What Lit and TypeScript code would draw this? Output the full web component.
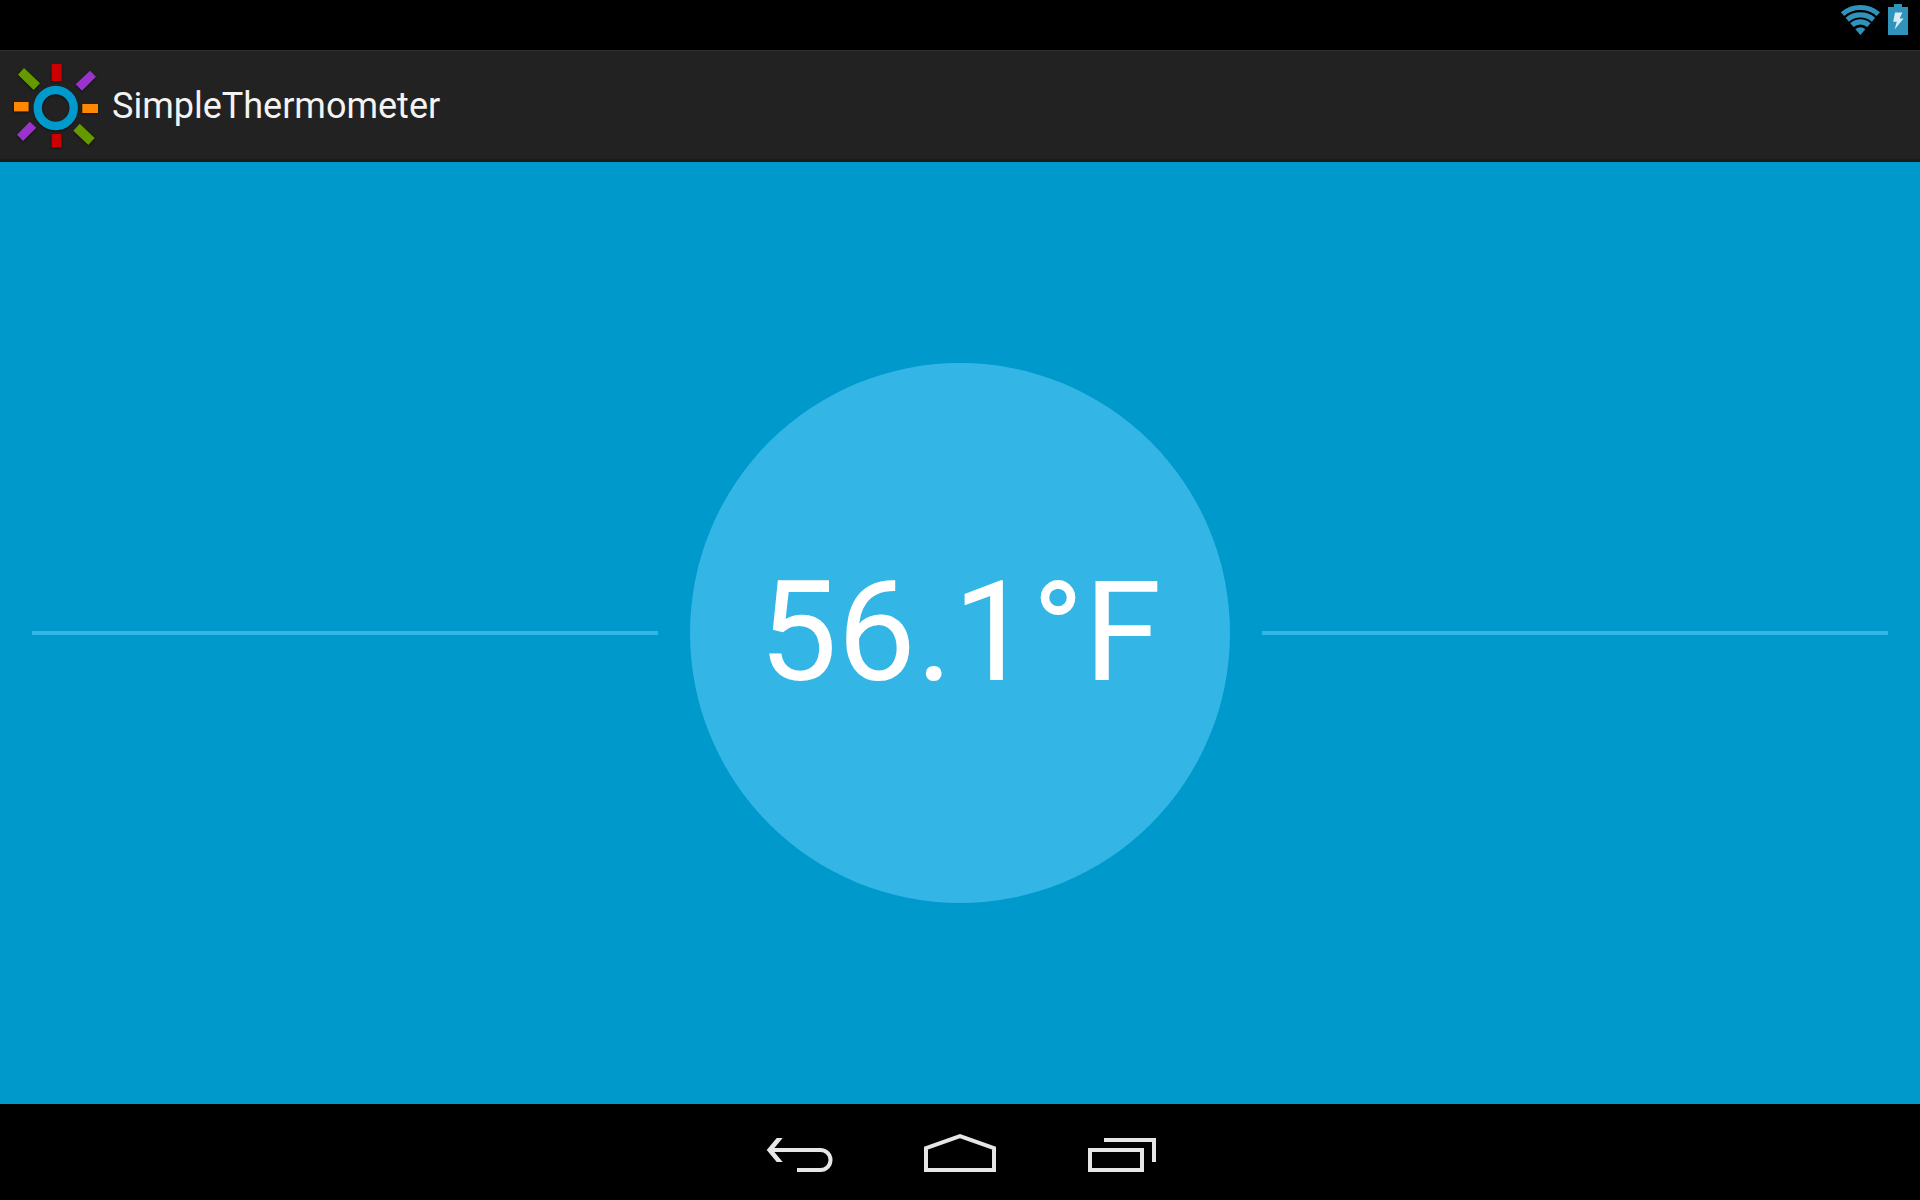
import { LitElement, html, css, svg } from "lit";
import { customElement, property } from "lit/decorators.js";

@customElement("status-bar")
export class StatusBar extends LitElement {
  static styles = css`
    :host {
      display: flex;
      justify-content: flex-end;
      gap: 7px;
      height: 50px;
      padding: 4px 12px 0 0;
      box-sizing: border-box;
      background: #000;
    }
    .glyph {
      display: block;
      height: 32px;
      fill: #2f93bb;
    }
    .arc {
      fill: none;
      stroke: #2f93bb;
      stroke-width: 5.2;
    }
    .bolt {
      fill: #d8edf5;
    }
  `;

  render() {
    return html`
      <svg class="glyph" width="41" height="32" viewBox="0 0 41 32" role="img" aria-label="Wi-Fi connected">
        <path class="arc" d="M2.5 10.1 A27.5 27.5 0 0 1 38.3 10.1" />
        <path class="arc" d="M7.3 15.7 A20.2 20.2 0 0 1 33.5 15.7" />
        <path class="arc" d="M11.9 21.1 A13 13 0 0 1 28.9 21.1" />
        <path d="M15.4 25.2 A7.7 7.7 0 0 1 25.4 25.2 L20.4 31 Z" />
      </svg>
      <svg class="glyph" width="20" height="32" viewBox="0 0 20 32" role="img" aria-label="Battery charging">
        <path d="M6 0 H14 V3 H20 V31 H0 V3 H6 Z" />
        <path class="bolt" d="M7 8.6 H14.4 L11.6 14.6 H15.6 L6.6 25.4 L8.8 17.8 H5.2 Z" />
      </svg>
    `;
  }
}

@customElement("action-bar")
export class ActionBar extends LitElement {
  @property() heading = "";

  static styles = css`
    :host {
      display: flex;
      align-items: center;
      gap: 8px;
      height: 112px;
      padding: 0 8px;
      box-sizing: border-box;
      background: #222;
      box-shadow: inset 0 1px #2e2e2e, inset 0 -3px #1b1b1b;
    }
    .logo {
      display: block;
      width: 96px;
      height: 96px;
      filter: drop-shadow(0 1px 1px #0008);
    }
    .title {
      margin: 0;
      font: 400 36px/48px Roboto, sans-serif;
      color: #f3f3f3;
    }
    .red { fill: #c00; }
    .orange { fill: #f80; }
    .green { fill: #690; }
    .purple { fill: #93c; }
    .ring {
      fill: none;
      stroke: #09c;
      stroke-width: 8.4;
    }
  `;

  render() {
    return html`
      <svg class="logo" viewBox="8 58 96 96" aria-hidden="true">
        <rect class="red" x="51.7" y="64" width="10" height="17" />
        <rect class="red" x="51.7" y="134" width="9.6" height="13.3" />
        <rect class="orange" x="14" y="102" width="14.6" height="9.4" />
        <rect class="orange" x="82.3" y="104" width="15.7" height="9" />
        <path class="green" d="M24 68 L40 83.3 L33.7 90 L18 74.7 Z M79.7 123.7 L94.7 138 L88.3 145 L73.3 130.7 Z" />
        <path class="purple" d="M90 70.7 L96 76.7 L82 90.7 L75.7 84.3 Z M29.7 121.7 L36.3 127.7 L23 141 L17 134.7 Z" />
        <circle class="ring" cx="55.7" cy="108" r="18" />
      </svg>
      <h1 class="title">${this.heading}</h1>
    `;
  }
}

@customElement("temperature-dial")
export class TemperatureDial extends LitElement {
  @property() reading = "";

  static styles = css`
    :host {
      display: flex;
      align-items: center;
      gap: 32px;
      padding: 0 32px;
      background: #09c;
    }
    .rule {
      flex: 1;
      height: 4px;
      background: #33b5e5;
    }
    .dial {
      display: flex;
      align-items: center;
      justify-content: center;
      width: 540px;
      aspect-ratio: 1;
      box-sizing: border-box;
      padding-bottom: 2px;
      border-radius: 50%;
      background: #33b5e5;
      color: #fff;
      font: 400 140px/164px Roboto, sans-serif;
    }
  `;

  render() {
    return html`
      <div class="rule"></div>
      <div class="dial">${this.reading}</div>
      <div class="rule"></div>
    `;
  }
}

const NAV_ITEMS = [
  {
    label: "Back",
    shape: svg`
      <path d="M50 46 H100.5 A10 10 0 0 1 100.5 66 H77" />
      <path class="solid" d="M46.7 46 L56.7 34 H62.7 L52.7 46 L62.7 58 H56.7 Z" />`,
  },
  {
    label: "Home",
    shape: svg`<path d="M46 66 V44.2 L80 32.2 L114 44.2 V66 Z" />`,
  },
  {
    label: "Recent apps",
    shape: svg`<path d="M50 46 H102 V66 H50 Z M64 36 H114 V58" />`,
  },
];

@customElement("nav-bar")
export class NavBar extends LitElement {
  static styles = css`
    :host {
      display: flex;
      justify-content: center;
      height: 96px;
      background: #000;
    }
    .key {
      padding: 0;
      border: 0;
      background: none;
      cursor: pointer;
    }
    .icon {
      display: block;
      fill: none;
      stroke: #e6e6e6;
      stroke-width: 4;
    }
    .solid {
      fill: #e6e6e6;
      stroke: none;
    }
  `;

  render() {
    return NAV_ITEMS.map(
      ({ label, shape }) => html`
        <button class="key" type="button" aria-label=${label}>
          <svg class="icon" width="160" height="96" viewBox="0 0 160 96" aria-hidden="true">${shape}</svg>
        </button>
      `,
    );
  }
}

@customElement("app-root")
export class AppRoot extends LitElement {
  static styles = css`
    :host {
      display: flex;
      flex-direction: column;
      min-height: 100vh;
    }
    .content {
      flex: 1;
    }
  `;

  render() {
    return html`
      <status-bar></status-bar>
      <action-bar heading="SimpleThermometer"></action-bar>
      <temperature-dial class="content" reading="56.1°F"></temperature-dial>
      <nav-bar></nav-bar>
    `;
  }
}
